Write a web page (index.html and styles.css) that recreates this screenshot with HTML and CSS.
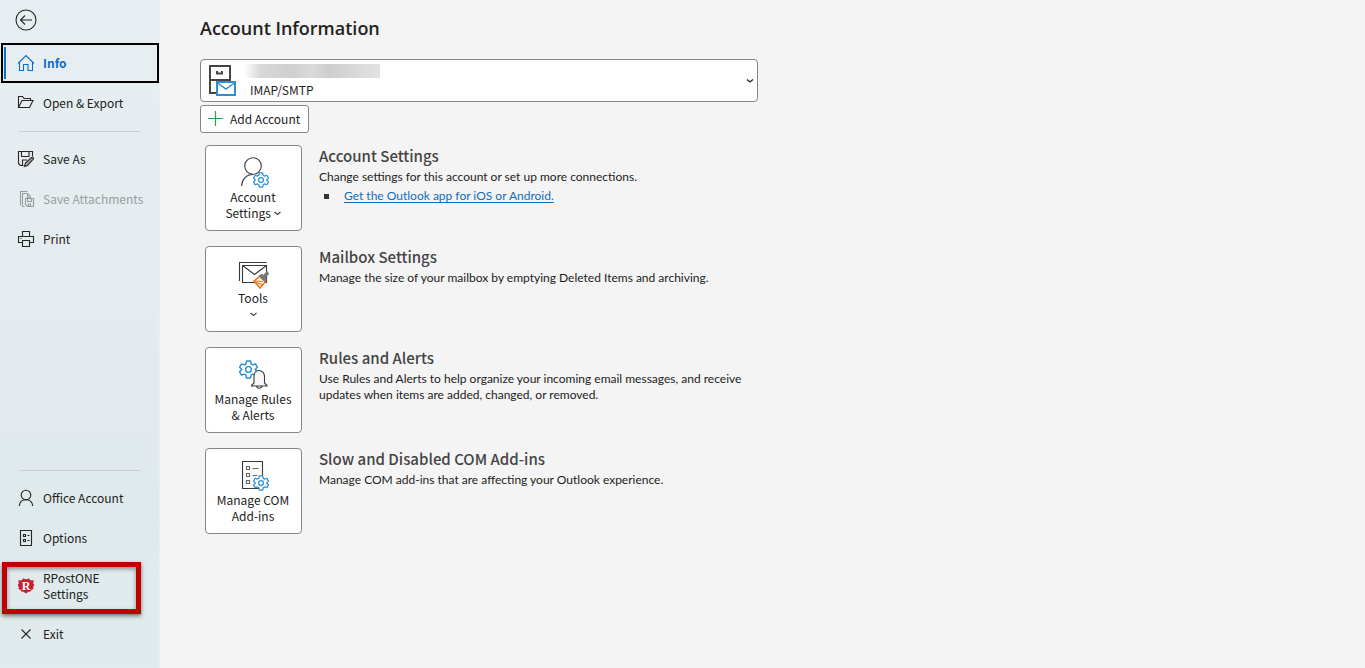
FILE: index.html
```html
<!DOCTYPE html>
<html lang="en">
<head>
<meta charset="utf-8">
<title>Account Information</title>
<link rel="stylesheet" href="styles.css">
</head>
<body>
<svg class="defs" aria-hidden="true">
  <symbol id="gear" viewBox="0 0 16 16">
    <path d="M6.300 .8h3.400l.5 2.500 1.400.8 2.300-.9 1.600 2.900L13.700 8l1.800 1.900-1.600 2.900-2.300-.9-1.400.8-.5 2.500H6.300l-.5-2.500-1.400-.8-2.300.9L.5 9.900 2.300 8 .5 6.100l1.600-2.900 2.300.9 1.400-.8z" fill="#f7fafc" stroke="#2b8fd0" stroke-width="1.200" stroke-linejoin="round"/>
    <circle cx="8" cy="8" r="2.400" fill="#fff" stroke="#2b8fd0" stroke-width="1.200"/>
  </symbol>
</svg>
<div class="app">
  <nav class="sidebar" aria-label="File menu">
    <button class="back" aria-label="Back">
      <svg width="22" height="22" viewBox="0 0 22 22"><circle cx="11" cy="11" r="10"/><path d="M17 11H5.500M10 6.500L5.500 11l4.500 4.500"/></svg>
    </button>
    <button class="item active" aria-current="page">
      <svg width="18" height="18" viewBox="0 0 18 18"><path d="M1 9.500L9 1.500l8 8M2.500 8.500v8h4v-6h4.500v6h4.500v-8"/></svg>
      <span>Info</span>
    </button>
    <button class="item">
      <svg width="18" height="18" viewBox="0 0 18 18"><path d="M1.500 13.500V2.500h4l1.500 2h6.500v2M1.500 13.500h11l3.500-7H5z"/></svg>
      <span>Open &amp; Export</span>
    </button>
    <hr class="rule">
    <button class="item">
      <svg width="18" height="18" viewBox="0 0 18 18"><path d="M6.500 15.500h-3l-2-2v-12h14v5M4.500 1.500v5h7.500v-5M5.500 15v-5H10"/><path d="M7.500 16.500l1-3.500 6-5.500c1.500-.8 2.500.5 1.700 1.700l-5.700 6.300z" fill="#aaa"/></svg>
      <span>Save As</span>
    </button>
    <button class="item" disabled>
      <svg width="18" height="18" viewBox="0 0 18 18"><path d="M3.500 15.500v-14h7M5.500 16.500v-13h5l3 3v1M10.500 4v3.500h3M5.500 16.500h2"/><path d="M8.500 8.500h8v8h-6l-2-2zM10.500 8.500v3h4v-3M11.500 16.500v-2.500h2v2.500"/></svg>
      <span>Save Attachments</span>
    </button>
    <button class="item">
      <svg width="18" height="18" viewBox="0 0 18 18"><path d="M5.500 6.500v-5h7v5M5.500 12.500h-4v-6h15v6h-4M5.500 10.500h7v6h-7zM3.500 8.500h1"/></svg>
      <span>Print</span>
    </button>
    <div class="spacer"></div>
    <hr class="rule">
    <button class="item">
      <svg width="18" height="18" viewBox="0 0 18 18"><circle cx="9" cy="6" r="4.800"/><path d="M2.300 17c.3-4 3-6.200 6.700-6.200s6.400 2.200 6.700 6.200"/></svg>
      <span>Office Account</span>
    </button>
    <button class="item">
      <svg width="18" height="18" viewBox="0 0 18 18"><path d="M3.500 1.500h11v15h-11zM6.500 5.500h2v2h-2zM6.500 10.500h2v2h-2zM10.500 6.500h2M10.500 11.500h2"/></svg>
      <span>Options</span>
    </button>
    <button class="item tall">
      <svg class="rpost" width="18" height="18" viewBox="0 0 18 18"><path fill="#c8202c" d="M1 3.500l3.500-.3L6 1.500l3 .8 3-.8 1.500 1.700 3.500.3-.9 2.500 1.100 2-1 2 .3 2-2 .8-.8 1.800-2.200.2L9 16.500l-2.500-1.700-2.200-.2-.8-1.800-2-.8.3-2-1-2 1.100-2z"/><text x="9" y="13" text-anchor="middle">R</text></svg>
      <span>RPostONE Settings</span>
    </button>
    <button class="item">
      <svg width="18" height="18" viewBox="0 0 18 18"><path d="M4.500 4.500l9 9M13.500 4.500l-9 9"/></svg>
      <span>Exit</span>
    </button>
  </nav>

  <main class="content">
    <h1>Account Information</h1>
    <div class="account">
      <select class="account-select" aria-label="Account"><option>IMAP/SMTP</option></select>
      <svg class="account-icon" width="30" height="34" viewBox="0 0 30 34" fill="none">
        <path d="M8 28H2V1h20v14H2M9 6v2.500h5V6" stroke="#444" stroke-width="2"/>
        <path d="M9 17h18v13H9z" fill="#fff" stroke="#2b8fd0" stroke-width="2"/><path d="M9.500 18l8.500 6 8.500-6" stroke="#2b8fd0" stroke-width="1.500"/>
      </svg>
      <span class="redacted"></span>
      <svg class="account-arrow" width="8" height="6" viewBox="0 0 8 6"><path d="M1 1.500l3 2.500 3-2.500"/></svg>
    </div>
    <button class="add">
      <svg width="16" height="16" viewBox="0 0 16 16"><path d="M7.500 0v15M0 7.500h15"/></svg>
      Add Account
    </button>

    <div class="sections">
      <section class="row">
        <button class="tile">
          <svg width="32" height="32" viewBox="0 0 32 32"><circle cx="16" cy="9" r="8.300"/><path d="M4.500 29c.5-7 5-11.500 11.500-11.500"/><use href="#gear" x="16" y="15" width="16" height="16"/></svg>
          <span>Account<br>Settings <svg class="chev" width="7" height="5" viewBox="0 0 7 5"><path d="M.5 1l3 2.500 3-2.500"/></svg></span>
        </button>
        <div class="text">
          <h2>Account Settings</h2>
          <p>Change settings for this account or set up more connections.</p>
          <ul><li><a href="#">Get the Outlook app for iOS or Android.</a></li></ul>
        </div>
      </section>
      <section class="row">
        <button class="tile">
          <svg width="32" height="32" viewBox="0 0 32 32"><path d="M2.500 23V4.500h27M5.500 7.500h24v17h-24zM5.500 7.500l12 9 12-9"/><path d="M17 23l5.500-4.500 6 5-5.500 6.500z" fill="#fff3e4" stroke="#e5751a" stroke-width="1.500"/><path d="M19 24.500l6 2M17 23l9 .500" stroke="#e5751a"/><path d="M22.500 18l2-1.500 2 1 3.500-3.500 1.500 1.500-3 4 .5 2-1.500 1.500z" fill="#777" stroke="#777"/></svg>
          <span>Tools<br><svg class="chev" width="7" height="5" viewBox="0 0 7 5"><path d="M.5 1l3 2.500 3-2.500"/></svg></span>
        </button>
        <div class="text">
          <h2>Mailbox Settings</h2>
          <p>Manage the size of your mailbox by emptying Deleted Items and archiving.</p>
        </div>
      </section>
      <section class="row">
        <button class="tile">
          <svg width="32" height="32" viewBox="0 0 32 32"><use href="#gear" x="2" y="1" width="19" height="19"/><path d="M14.500 26.500l2.500-2.500v-6.500c0-3.500 2-6 5-6s5.500 2.500 5.500 6v6.500l2.500 2.500v.500H14.500zM19.500 27c.3 3 5 3 5.500 0" fill="#f8f8f8"/></svg>
          <span>Manage Rules<br>&amp; Alerts</span>
        </button>
        <div class="text">
          <h2>Rules and Alerts</h2>
          <p>Use Rules and Alerts to help organize your incoming email messages, and receive updates when items are added, changed, or removed.</p>
        </div>
      </section>
      <section class="row">
        <button class="tile">
          <svg width="32" height="32" viewBox="0 0 32 32"><path d="M5.500 1.500h20v27h-20z" fill="#fafafa"/><path d="M9.500 6.500h3v3h-3zM9.500 13.500h3v3h-3zM9.500 20.500h3v3h-3zM15.500 8.500h6M15.500 15.500h5" stroke="#666"/><use href="#gear" x="16" y="15" width="16" height="16"/></svg>
          <span>Manage COM<br>Add-ins</span>
        </button>
        <div class="text">
          <h2>Slow and Disabled COM Add-ins</h2>
          <p>Manage COM add-ins that are affecting your Outlook experience.</p>
        </div>
      </section>
    </div>
  </main>
</div>
</body>
</html>
```
FILE: styles.css
```css
* { box-sizing: border-box; }
body {
  margin: 0;
  background: #f4f4f4;
  color: #222;
  font: 12px/16px "Noto Sans CJK SC", "Noto Sans", sans-serif;
}
button { font: inherit; color: inherit; }
.defs { position: absolute; width: 0; height: 0; }
.app { display: flex; min-height: 100vh; }

.sidebar {
  flex: none;
  width: 160px;
  display: flex;
  flex-direction: column;
  padding: 8px 0 14px;
  background: linear-gradient(#e7eef1, #e4ecef 45%, #e0e9eb 75%, #e1eaec);
  border-right: 1px solid #e9eef0;
}
.sidebar svg { flex: none; fill: none; stroke: #262626; stroke-width: 1.1; }
.back {
  align-self: flex-start;
  height: 35px;
  margin-left: 15px;
  padding: 0;
  border: 0;
  background: none;
}
.back svg { display: block; margin-bottom: 12px; }
.item {
  display: flex;
  align-items: center;
  gap: 8px;
  min-height: 40px;
  padding: 0 16px 0 17px;
  border: 0;
  background: none;
  text-align: left;
}
.item span { flex: 1; white-space: nowrap; }
.item:disabled { color: #9a9d9f; }
.sidebar .item:disabled svg { stroke: #9a9d9f; }
.active {
  position: relative;
  margin: 0 0 0 1px;
  padding-left: 16px;
  outline: 2px solid #000;
  outline-offset: -2px;
  color: #106ebe;
  font-weight: 600;
}
.sidebar .active svg { stroke: #106ebe; }
.active::before {
  content: "";
  position: absolute;
  left: 3px;
  top: 4px;
  bottom: 4px;
  width: 2px;
  background: #106ebe;
}
.rule { width: 121px; margin: 8px 0 7px 19px; border: 0; border-top: 1px solid #cbcfd1; }
.spacer { flex: 1; }
.tall { position: relative; min-height: 56px; }
.tall span { white-space: normal; }
.tall::after {
  content: "";
  position: absolute;
  inset: 4px 18px 0 2px;
  border: 5px solid #c00000;
  box-shadow: 0 2px 4px rgba(0, 0, 0, .5), inset 0 2px 4px rgba(0, 0, 0, .4);
}
.sidebar .rpost { stroke: none; }
.rpost text { fill: #fff; font: bold 12px "Liberation Serif", serif; }

.content { flex: 1; min-width: 0; padding: 16px 40px; }
h1 { margin: 0; font: 600 18px/24px "Open Sans", sans-serif; }
.account { position: relative; max-width: 558px; margin: 19px 0 3px; }
.account-select {
  display: block;
  width: 100%;
  height: 43px;
  padding: 18px 24px 0 49px;
  appearance: none;
  border: 1px solid #868686;
  border-radius: 4px;
  background: #fff;
  color: #222;
  font: inherit;
}
.account-icon { position: absolute; left: 8px; top: 6px; }
.redacted {
  position: absolute;
  left: 44px;
  top: 5px;
  width: 136px;
  height: 14px;
  background: linear-gradient(90deg, #fff, #d8d8d8 12%, #cfcfcf 35%, #dadada 50%, #cdcdcd 62%, #d8d8d8 80%, #e2e2e2);
}
.account-arrow { position: absolute; right: 4px; top: 19px; fill: none; stroke: #222; stroke-width: 1.3; }
.add {
  display: flex;
  align-items: center;
  gap: 6px;
  height: 28px;
  padding: 0 8px 0 7px;
  border: 1px solid #868686;
  border-radius: 3px;
  background: #fff;
}
.add svg { stroke: #2f9e4f; stroke-width: 1.2; }

.sections { display: grid; gap: 15px; max-width: 560px; margin: 12px 0 0 5px; }
.row { display: flex; gap: 17px; }
.tile {
  flex: none;
  display: flex;
  flex-direction: column;
  align-items: center;
  width: 97px;
  height: 86px;
  padding: 11px 1px 0 0;
  border: 1px solid #868686;
  border-radius: 4px;
  background: #fff;
}
.tile svg { fill: none; stroke: #3a3a3a; stroke-width: 1.1; }
.tile .chev { vertical-align: 2px; }
.text { flex: 1; min-width: 0; font-family: Lato, sans-serif; }
h2 { margin: 0 0 3px; font: 500 15px/21px "Noto Sans CJK SC", sans-serif; color: #444; }
p { margin: 0; }
ul { margin: 3px 0 0; padding: 0; list-style: none; }
li { display: flex; align-items: center; gap: 15px; }
li::before { content: ""; width: 5px; height: 5px; margin-left: 5px; background: #333; }
a { color: #106ebe; text-underline-offset: 2px; }
```
